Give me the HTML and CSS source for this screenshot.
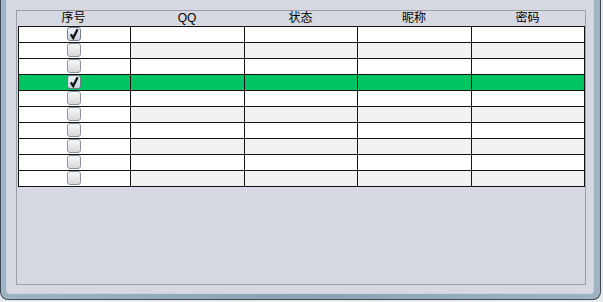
FILE: index.html
```html
<!DOCTYPE html>
<html lang="zh">
<head>
  <meta charset="UTF-8" />
  <title>账号列表</title>
  <link rel="stylesheet" href="styles.css">
</head>
<body>
  <div class="window">
    <div class="client">
      <div class="panel">
        <div class="head">
          <div>序号</div>
          <div>QQ</div>
          <div>状态</div>
          <div>昵称</div>
          <div>密码</div>
        </div>
        <div class="grid" id="grid"></div>
      </div>
    </div>
  </div>

  <script>
    const grid = document.getElementById("grid");
    const checked = [0, 3];
    const tick = '<svg width="12" height="12" viewBox="0 0 12 12"><path d="M2.8 6.3 L5.2 10 L9.6 1.2" fill="none" stroke="#111" stroke-width="2.3"/></svg>';

    for (let i = 0; i < 10; i++) {
      const row = document.createElement("div");
      row.className = "row";
      if (i % 2 === 1) row.classList.add("alt");
      if (i === 3) row.classList.add("selected");

      const box = checked.includes(i)
        ? '<span class="check on">' + tick + '</span>'
        : '<span class="check"></span>';

      row.innerHTML = '<div class="cell first">' + box + '</div>'
        + '<div class="cell"></div><div class="cell"></div>'
        + '<div class="cell"></div><div class="cell"></div>';
      grid.appendChild(row);
    }
  </script>
</body>
</html>
```

FILE: styles.css
```css
body {
  margin: 0;
  background-color: #e9ecef;
  font-family: "Liberation Sans", "Noto Sans CJK SC", sans-serif;
  font-size: 12px;
}
.window {
  box-sizing: border-box;
  width: 601px;
  height: 300px;
  border: 1px solid #3e4953;
  border-top: 0;
  border-radius: 0 0 8px 8px;
  background: linear-gradient(90deg, #9fb4c3, #8aa2b4 50%, #9fb4c3);
  padding: 0 6px 5px 5px;
}
.client {
  box-sizing: border-box;
  height: 294px;
  border: 1px solid #c9d6df;
  border-top: 0;
  border-radius: 0 0 4px 4px;
  background-color: #d6d9e1;
  padding: 10px 0 0 9px;
}
.panel {
  box-sizing: border-box;
  width: 570px;
  height: 275px;
  border: 1px solid #9c9fa6;
  background-color: #d6d9e1;
}
.head {
  display: grid;
  grid-template-columns: 113px 114px 113px 114px 113px;
  height: 15px;
  line-height: 15px;
  color: #000;
  text-align: center;
}
.grid {
  width: 567px;
  margin-left: 1px;
  border-top: 1px solid #141414;
  border-right: 1px solid #141414;
  box-sizing: border-box;
}
.row {
  display: grid;
  grid-template-columns: 112px 114px 113px 114px 113px;
  height: 16px;
  box-sizing: border-box;
  border-bottom: 1px solid #141414;
  background-color: #fff;
}
.cell {
  border-left: 1px solid #141414;
}
.row.alt .cell {
  background-color: #f1f1f1;
}
.row .cell.first {
  background-color: #fff;
  display: flex;
  justify-content: center;
  padding-right: 1px;
}
.row.selected .cell,
.row.selected .cell.first {
  background-color: #00c462;
}
.check {
  box-sizing: border-box;
  width: 14px;
  height: 14px;
  border: 1px solid #8a949e;
  border-radius: 3px;
  background: linear-gradient(#f7f7f7, #d9d9dc);
  display: flex;
  align-items: center;
  justify-content: center;
}
.check.on {
  background: linear-gradient(#eef2f7, #c9d3df);
  border-color: #6f7c8a;
}
```
